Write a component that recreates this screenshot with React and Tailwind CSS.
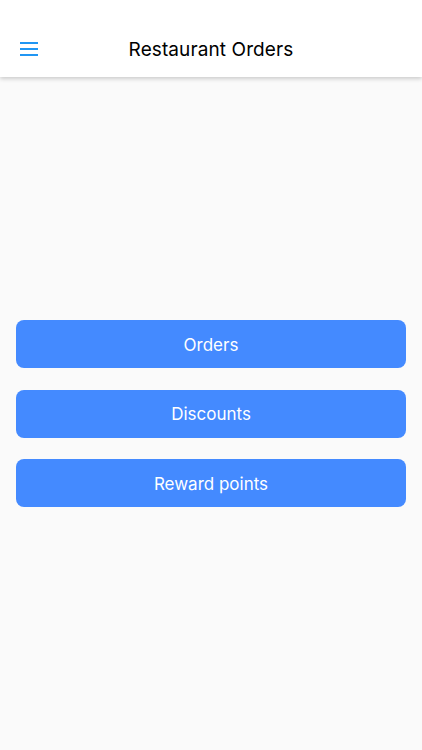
const items = ['Orders', 'Discounts', 'Reward points']

export default function App() {
  return (
    <div className="flex flex-col w-full h-[750px] bg-[#fafafa] font-['Inter','Noto_Sans',sans-serif]">
      <header className="relative z-10 flex items-center h-[77px] pt-[24px] bg-white shadow-[0_2px_4px_rgba(0,0,0,0.18)]">
        <button type="button" className="absolute left-[20px] top-[42px] w-[18px] h-[14px] flex flex-col justify-between">
          <span className="block h-[2px] w-full bg-[#2196f3]" />
          <span className="block h-[2px] w-full bg-[#2196f3]" />
          <span className="block h-[2px] w-full bg-[#2196f3]" />
        </button>
        <h1 className="flex-1 text-center text-[19px] text-black tracking-[0.1px]">Restaurant Orders</h1>
      </header>
      <main className="flex-1 flex flex-col justify-center gap-[21.5px] px-[16px]">
        {items.map((label) => (
          <button
            key={label}
            type="button"
            className="h-[48px] w-full rounded-[8px] bg-[#448aff] text-white text-[17px] pt-[3px]"
          >
            {label}
          </button>
        ))}
      </main>
    </div>
  )
}
